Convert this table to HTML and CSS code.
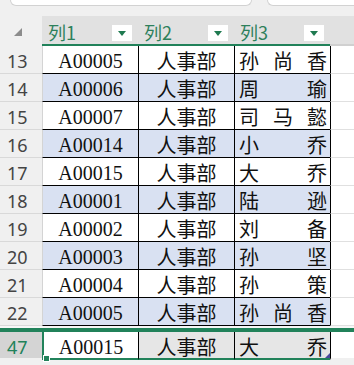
FILE: index.html
```html
<!DOCTYPE html>
<html lang="zh">
<head>
<meta charset="utf-8">
<title>表格</title>
<link rel="stylesheet" href="styles.css">
</head>
<body>
<div class="topbar">
  <div class="fbox fbox-left"></div>
  <div class="fbox fbox-right"></div>
</div>
<div class="sheet">
  <div class="row header">
    <div class="corner"><span class="corner-tri"></span></div>
    <div class="hcell"><span class="htext">列1</span><span class="dd"><span class="tri"></span></span></div>
    <div class="hcell"><span class="htext">列2</span><span class="dd"><span class="tri"></span></span></div>
    <div class="hcell"><span class="htext">列3</span><span class="dd"><span class="tri"></span></span></div>
    <div class="hfill"></div>
  </div>

  <div class="row data">
    <div class="rn">13</div><div class="c ca">A00005</div><div class="c cb">人事部</div><div class="c cc"><span>孙</span><span>尚</span><span>香</span></div><div class="fill"></div>
  </div>
  <div class="row data band">
    <div class="rn">14</div><div class="c ca">A00006</div><div class="c cb">人事部</div><div class="c cc"><span>周</span><span>瑜</span></div><div class="fill"></div>
  </div>
  <div class="row data">
    <div class="rn">15</div><div class="c ca">A00007</div><div class="c cb">人事部</div><div class="c cc"><span>司</span><span>马</span><span>懿</span></div><div class="fill"></div>
  </div>
  <div class="row data band">
    <div class="rn">16</div><div class="c ca">A00014</div><div class="c cb">人事部</div><div class="c cc"><span>小</span><span>乔</span></div><div class="fill"></div>
  </div>
  <div class="row data">
    <div class="rn">17</div><div class="c ca">A00015</div><div class="c cb">人事部</div><div class="c cc"><span>大</span><span>乔</span></div><div class="fill"></div>
  </div>
  <div class="row data band">
    <div class="rn">18</div><div class="c ca">A00001</div><div class="c cb">人事部</div><div class="c cc"><span>陆</span><span>逊</span></div><div class="fill"></div>
  </div>
  <div class="row data">
    <div class="rn">19</div><div class="c ca">A00002</div><div class="c cb">人事部</div><div class="c cc"><span>刘</span><span>备</span></div><div class="fill"></div>
  </div>
  <div class="row data band">
    <div class="rn">20</div><div class="c ca">A00003</div><div class="c cb">人事部</div><div class="c cc"><span>孙</span><span>坚</span></div><div class="fill"></div>
  </div>
  <div class="row data">
    <div class="rn">21</div><div class="c ca">A00004</div><div class="c cb">人事部</div><div class="c cc"><span>孙</span><span>策</span></div><div class="fill"></div>
  </div>
  <div class="row data band">
    <div class="rn">22</div><div class="c ca">A00005</div><div class="c cb">人事部</div><div class="c cc"><span>孙</span><span>尚</span><span>香</span></div><div class="fill"></div>
  </div>

  <div class="gap"></div>
  <div class="freeze"></div>

  <div class="row sel">
    <div class="rn rn-sel">47</div>
    <div class="c ca active">A00015<span class="handle"></span></div>
    <div class="c cb inrange">人事部</div>
    <div class="c cc inrange"><span>大</span><span>乔</span><span class="resize"></span></div>
    <div class="fill fill-sel"></div>
  </div>
</div>
</body>
</html>
```

FILE: styles.css
```css
html, body {
  margin: 0;
  padding: 0;
}
body {
  width: 354px;
  height: 365px;
  overflow: hidden;
  background: #f0f0f0;
  font-family: "Noto Sans", "Noto Sans CJK SC", sans-serif;
}

/* formula bar remnants */
.topbar {
  display: flex;
  gap: 15px;
  height: 16px;
  padding-left: 10px;
  box-sizing: border-box;
}
.fbox {
  height: 6px;
  background: #ffffff;
  border: 1px solid #d2d2d2;
  border-top: none;
  border-radius: 0 0 7px 7px;
  box-sizing: border-box;
}
.fbox-left { width: 242px; }
.fbox-right { flex: 1; border-right: none; border-bottom-right-radius: 0; }

/* grid rows */
.row {
  display: grid;
  grid-template-columns: 42px 96px 96px 96px 24px;
}

/* header */
.header {
  height: 30px;
}
.corner {
  padding: 12px 0 0 14px;
  box-sizing: border-box;
}
.corner-tri {
  display: block;
  width: 0;
  height: 0;
  border-left: 8px solid transparent;
  border-bottom: 8px solid #8c8c8c;
}
.hcell {
  background: #e1e1e1;
  border-bottom: 2px solid #21825a;
  display: flex;
  align-items: center;
  justify-content: space-between;
  padding: 4px 6px 0 6px;
  box-sizing: border-box;
}
.htext {
  font-family: "Noto Sans CJK SC", sans-serif;
  font-size: 18px;
  color: #2d805b;
  line-height: 1;
}
.dd {
  width: 20px;
  height: 16px;
  background: #ffffff;
  display: flex;
  align-items: center;
  justify-content: center;
  margin-top: 2px;
}
.tri {
  width: 0;
  height: 0;
  border-left: 4px solid transparent;
  border-right: 4px solid transparent;
  border-top: 5px solid #1f7a50;
}
.hfill {
  background: #e1e1e1;
  border-bottom: 2px solid #d0d0d0;
}

/* data rows */
.data {
  height: 28px;
}
.rn {
  background: #f0f0f0;
  border-bottom: 1px solid #d9d9d9;
  font-size: 18px;
  color: #444444;
  padding: 3px 0 0 7px;
  box-sizing: border-box;
  display: flex;
  align-items: center;
  line-height: 1;
}
.c {
  background: #ffffff;
  border-bottom: 1px solid #000000;
  box-sizing: border-box;
  display: flex;
  align-items: center;
  padding-top: 3px;
  line-height: 1;
  position: relative;
}
.band .c {
  background: #d9e1f2;
}
.ca {
  justify-content: center;
  font-family: "Liberation Serif", serif;
  font-size: 20px;
  color: #111111;
  border-left: 1px solid #d4d4d4;
}
.cb {
  justify-content: center;
  font-family: "Noto Sans CJK SC", sans-serif;
  font-size: 20px;
  color: #111111;
  border-left: 1px solid #000000;
}
.cc {
  justify-content: space-between;
  font-family: "Noto Sans CJK SC", sans-serif;
  font-size: 20px;
  color: #111111;
  border-left: 1px solid #000000;
  padding-left: 4px;
  padding-right: 3px;
}
.fill {
  background: #ffffff;
  border-left: 1px solid #000000;
  border-bottom: 1px solid #e0e0e0;
  box-sizing: border-box;
}

/* freeze divider */
.gap {
  height: 2px;
  background: #f7f7f7;
}
.freeze {
  height: 4px;
  background: #21825a;
}

/* selected row */
.sel {
  height: 28px;
}
.sel .c {
  border-bottom: 2px solid #21825a;
}
.rn-sel {
  background: #d4d4d4;
  color: #21825a;
  border-bottom: 2px solid #f0f0f0;
}
.active {
  background: #ffffff;
  border-left: 2px solid #21825a;
}
.inrange {
  background: #e6e6e6;
}
.fill-sel {
  border-bottom: 2px solid #f0f0f0;
}
.handle {
  position: absolute;
  left: -1px;
  bottom: -4px;
  width: 5px;
  height: 5px;
  background: #21825a;
  border: 1px solid #ffffff;
}
.resize {
  position: absolute;
  right: 0;
  bottom: 0;
  width: 0;
  height: 0;
  border-left: 5px solid transparent;
  border-bottom: 5px solid #4a4a9e;
}
```
